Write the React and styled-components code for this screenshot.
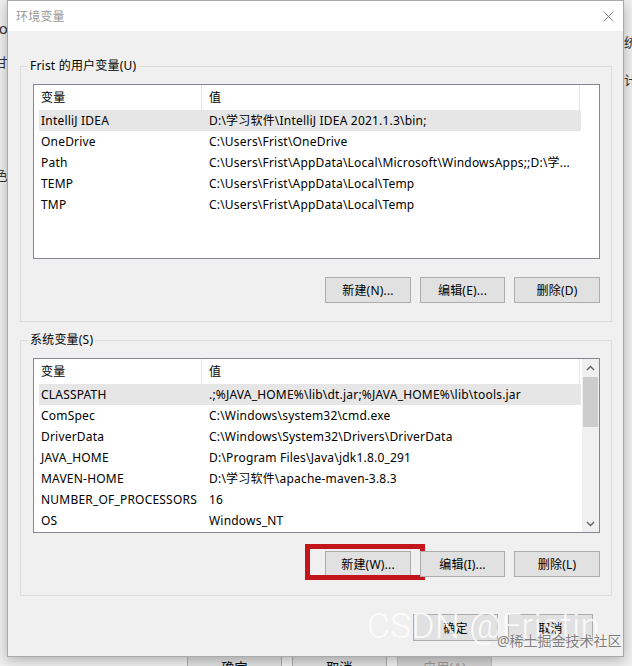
import React from 'react';
import styled, { createGlobalStyle } from 'styled-components';

const GlobalStyle = createGlobalStyle`
  html, body {
    margin: 0;
    padding: 0;
  }
  body {
    font-family: "Noto Sans", "Noto Sans CJK SC", sans-serif;
  }
  * {
    box-sizing: border-box;
  }
`;

const ui = `"Noto Sans", "Noto Sans CJK SC", sans-serif`;

const userVars = [
  ['IntelliJ IDEA', 'D:\\学习软件\\IntelliJ IDEA 2021.1.3\\bin;'],
  ['OneDrive', 'C:\\Users\\Frist\\OneDrive'],
  ['Path', 'C:\\Users\\Frist\\AppData\\Local\\Microsoft\\WindowsApps;;D:\\学...'],
  ['TEMP', 'C:\\Users\\Frist\\AppData\\Local\\Temp'],
  ['TMP', 'C:\\Users\\Frist\\AppData\\Local\\Temp'],
];

const systemVars = [
  ['CLASSPATH', '.;%JAVA_HOME%\\lib\\dt.jar;%JAVA_HOME%\\lib\\tools.jar'],
  ['ComSpec', 'C:\\Windows\\system32\\cmd.exe'],
  ['DriverData', 'C:\\Windows\\System32\\Drivers\\DriverData'],
  ['JAVA_HOME', 'D:\\Program Files\\Java\\jdk1.8.0_291'],
  ['MAVEN-HOME', 'D:\\学习软件\\apache-maven-3.8.3'],
  ['NUMBER_OF_PROCESSORS', '16'],
  ['OS', 'Windows_NT'],
];

const Desktop = styled.div`
  position: relative;
  width: 632px;
  height: 666px;
  overflow: hidden;
  background: #f0f0f0;
  font-family: ${ui};
  font-size: 12px;
  letter-spacing: 0.2px;
  color: #000;
`;

/* the System Properties window that sits behind the dialog */
const BackWindow = styled.div`
  position: absolute;
  left: 0;
  top: 0;
  width: 632px;
  height: 679px;
  display: grid;
  grid-template-columns: 8px 1fr 8px;
  grid-template-rows: 1fr 26px;
  background: #f0f0f0;
`;

const BackSide = styled.div`
  display: flex;
  flex-direction: column;
  align-items: ${(p) => (p.$left ? 'flex-end' : 'flex-start')};
  overflow: hidden;
  color: #333;
`;

const SideText = styled.span`
  white-space: nowrap;
  line-height: 16px;
  margin-top: ${(p) => p.$top}px;
  font-size: ${(p) => p.$size || 13}px;
`;

const BackFooter = styled.div`
  grid-column: 1 / -1;
  display: flex;
  gap: 10px;
  padding-left: 187px;
`;

const BackButton = styled.div`
  width: 95px;
  height: 26px;
  display: flex;
  align-items: center;
  justify-content: center;
  background: ${(p) => (p.$disabled ? '#d4d4d4' : '#e1e1e1')};
  border: 1px solid ${(p) => (p.$disabled ? '#bfbfbf' : '#adadad')};
  color: ${(p) => (p.$disabled ? '#9a9a9a' : '#000')};
  font-size: 13px;
`;

const Dialog = styled.div`
  position: absolute;
  left: 7px;
  top: 0;
  width: 617px;
  height: 657px;
  display: flex;
  flex-direction: column;
  background: #f0f0f0;
  border: 1px solid #a9a9a9;
  box-shadow: 0 3px 12px rgba(0, 0, 0, 0.28);
`;

const TitleBar = styled.div`
  height: 30px;
  display: flex;
  align-items: center;
  justify-content: space-between;
  padding: 0 9px 0 8px;
  background: #fff;
  color: #999;
  font-size: 12px;
`;

const Body = styled.div`
  display: flex;
  flex-direction: column;
  padding: 35px 11px 0 12px;
`;

const Group = styled.div`
  position: relative;
  border: 1px solid #dcdcdc;
  padding: 17px 11px 18px 12px;
  margin-top: ${(p) => p.$gap || 0}px;
`;

const Legend = styled.span`
  position: absolute;
  top: -9px;
  left: 7px;
  padding: 0 2px;
  background: #f0f0f0;
  line-height: 16px;
  white-space: nowrap;
`;

const ListBox = styled.div`
  height: 175px;
  display: flex;
  background: #fff;
  border: 1px solid #828790;
`;

const ListMain = styled.div`
  flex: 1;
  min-width: 0;
  overflow: hidden;
`;

const Header = styled.div`
  display: flex;
  height: 25px;
`;

const HeaderCell = styled.div`
  width: ${(p) => p.$w}px;
  flex-shrink: 0;
  padding-left: 7px;
  line-height: 25px;
  border-right: 1px solid #e5e5e5;
`;

const Row = styled.div`
  display: flex;
  width: 542px;
  height: 21px;
  margin-left: 5px;
  line-height: 21px;
  background: ${(p) => (p.$selected ? '#e6e6e6' : 'transparent')};
`;

const NameCell = styled.div`
  width: 163px;
  flex-shrink: 0;
  padding-left: 2px;
  white-space: nowrap;
  overflow: hidden;
`;

const ValueCell = styled.div`
  flex: 1;
  min-width: 0;
  padding-left: 7px;
  white-space: nowrap;
  overflow: hidden;
`;

const ScrollBar = styled.div`
  width: 17px;
  flex-shrink: 0;
  display: flex;
  flex-direction: column;
  background: #f0f0f0;
`;

const ScrollArrow = styled.div`
  height: 17px;
  display: flex;
  align-items: center;
  justify-content: center;
`;

const Thumb = styled.div`
  height: 50px;
  margin: 1px 1px 0;
  background: #cdcdcd;
`;

const Track = styled.div`
  flex: 1;
`;

const ButtonRow = styled.div`
  display: flex;
  justify-content: flex-end;
  gap: ${(p) => p.$gap || 9}px;
  margin-top: 18px;
  padding-right: ${(p) => p.$right || 0}px;
`;

const Button = styled.div`
  position: relative;
  width: ${(p) => p.$w || 86}px;
  height: ${(p) => p.$h || 26}px;
  display: flex;
  align-items: center;
  justify-content: center;
  background: #e1e1e1;
  border: 1px solid #adadad;
  white-space: nowrap;

  ${(p) =>
    p.$highlight &&
    `
    &::after {
      content: '';
      position: absolute;
      left: -21px;
      right: -15px;
      top: -8px;
      bottom: -4px;
      border: 5px solid #c3161c;
    }
  `}
`;

const Watermark = styled.div`
  position: absolute;
  left: 367px;
  top: 606px;
  font-family: Roboto, "Noto Sans", sans-serif;
  font-weight: 300;
  font-size: 35px;
  letter-spacing: 0.5px;
  color: rgba(255, 255, 255, 0.85);
  white-space: nowrap;
`;

const Credit = styled.div`
  position: absolute;
  left: 497px;
  top: 630px;
  font-size: 14px;
  letter-spacing: 0;
  color: #7d7d7d;
  white-space: nowrap;
  text-shadow: 0 0 2px #fff, 0 0 1px #fff;
`;

const Chevron = ({ down }) => (
  <svg width="9" height="6" viewBox="0 0 9 6">
    <polyline
      points={down ? '1,1 4.5,4.5 8,1' : '1,5 4.5,1.5 8,5'}
      fill="none"
      stroke="#606060"
      strokeWidth="1.3"
    />
  </svg>
);

const CloseIcon = () => (
  <svg width="11" height="11" viewBox="0 0 11 11">
    <path d="M0.5 0.5 L10.5 10.5 M10.5 0.5 L0.5 10.5" stroke="#8a8a8a" strokeWidth="1" fill="none" />
  </svg>
);

const VarList = ({ rows, scroll }) => (
  <ListBox>
    <ListMain>
      <Header>
        <HeaderCell $w={168}>变量</HeaderCell>
        <HeaderCell $w={378}>值</HeaderCell>
      </Header>
      {rows.map(([name, value], i) => (
        <Row key={name} $selected={i === 0}>
          <NameCell>{name}</NameCell>
          <ValueCell>{value}</ValueCell>
        </Row>
      ))}
    </ListMain>
    {scroll && (
      <ScrollBar>
        <ScrollArrow>
          <Chevron />
        </ScrollArrow>
        <Thumb />
        <Track />
        <ScrollArrow>
          <Chevron down />
        </ScrollArrow>
      </ScrollBar>
    )}
  </ListBox>
);

export default function App() {
  return (
    <>
      <GlobalStyle />
      <Desktop>
        <BackWindow>
          <BackSide $left>
            <SideText $top={20} $size={15}>Vo</SideText>
            <SideText $top={18}>甘</SideText>
            <SideText $top={97}>色</SideText>
          </BackSide>
          <div />
          <BackSide>
            <SideText $top={34}>统</SideText>
            <SideText $top={22}>计算</SideText>
          </BackSide>
          <BackFooter>
            <BackButton>确定</BackButton>
            <BackButton>取消</BackButton>
            <BackButton $disabled>应用(A)</BackButton>
          </BackFooter>
        </BackWindow>

        <Dialog>
          <TitleBar>
            <span>环境变量</span>
            <CloseIcon />
          </TitleBar>
          <Body>
            <Group>
              <Legend>Frist 的用户变量(U)</Legend>
              <VarList rows={userVars} />
              <ButtonRow>
                <Button>新建(N)...</Button>
                <Button $w={85}>编辑(E)...</Button>
                <Button>删除(D)</Button>
              </ButtonRow>
            </Group>
            <Group $gap={18}>
              <Legend>系统变量(S)</Legend>
              <VarList rows={systemVars} scroll />
              <ButtonRow>
                <Button $highlight>新建(W)...</Button>
                <Button $w={85}>编辑(I)...</Button>
                <Button>删除(L)</Button>
              </ButtonRow>
            </Group>
            <ButtonRow $gap={10} $right={19}>
              <Button $w={85} $h={27}>确定</Button>
              <Button $w={85} $h={27}>取消</Button>
            </ButtonRow>
          </Body>
        </Dialog>

        <Watermark>CSDN @Fristin</Watermark>
        <Credit>@稀土掘金技术社区</Credit>
      </Desktop>
    </>
  );
}
